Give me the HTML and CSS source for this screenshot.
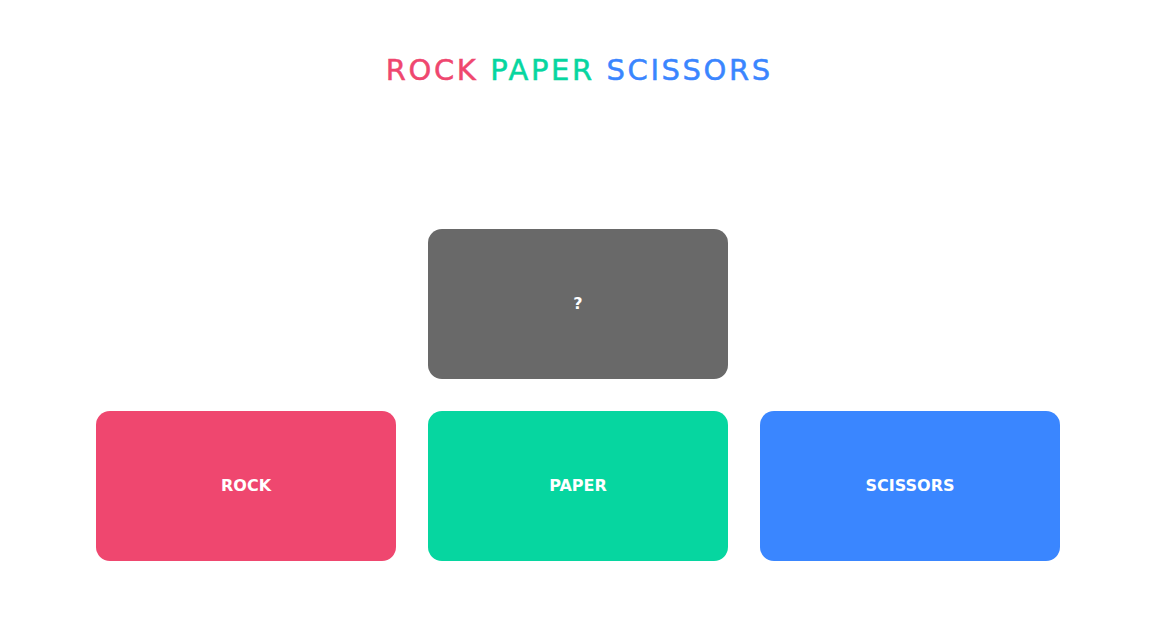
FILE: index.html
```html
<!DOCTYPE html>
<html lang="en">
<head>
<meta charset="utf-8">
<title>Rock Paper Scissors</title>
<link rel="stylesheet" href="styles.css">
</head>
<body>
<div class="app">
  <h1 class="title"><span class="t-rock">ROCK</span> <span class="t-paper">PAPER</span> <span class="t-scissors">SCISSORS</span></h1>
  <div class="board">
    <div class="card card-cpu">?</div>
    <div class="choices">
      <button class="card card-rock">ROCK</button>
      <button class="card card-paper">PAPER</button>
      <button class="card card-scissors">SCISSORS</button>
    </div>
  </div>
</div>
</body>
</html>
```
FILE: styles.css
```css
html, body {
  margin: 0;
  padding: 0;
  background: #ffffff;
}
.app {
  width: 1156px;
  font-family: "DejaVu Sans", "Noto Sans", sans-serif;
}
.title {
  margin: 0;
  padding-top: 50px;
  height: 40px;
  line-height: 40px;
  font-size: 29px;
  font-weight: 500;
  letter-spacing: 2.6px;
  text-indent: 2.6px;
  -webkit-text-stroke: 0.5px currentColor;
  text-align: center;
}
.t-rock { color: #ef476f; }
.t-paper { color: #06d6a0; }
.t-scissors { color: #3a86ff; }
.board {
  display: flex;
  flex-direction: column;
  align-items: center;
  gap: 32px;
  margin-top: 139px;
}
.choices {
  display: flex;
  gap: 32px;
}
.card {
  width: 300px;
  height: 150px;
  border: none;
  border-radius: 14px;
  display: flex;
  align-items: center;
  justify-content: center;
  color: #ffffff;
  font-family: "DejaVu Sans", "Noto Sans", sans-serif;
  font-size: 16px;
  font-weight: 700;
  padding: 0 0 2px;
  box-sizing: border-box;
}
.card-cpu { background: #696969; }
.card-rock { background: #ef476f; }
.card-paper { background: #06d6a0; }
.card-scissors { background: #3a86ff; }
```
